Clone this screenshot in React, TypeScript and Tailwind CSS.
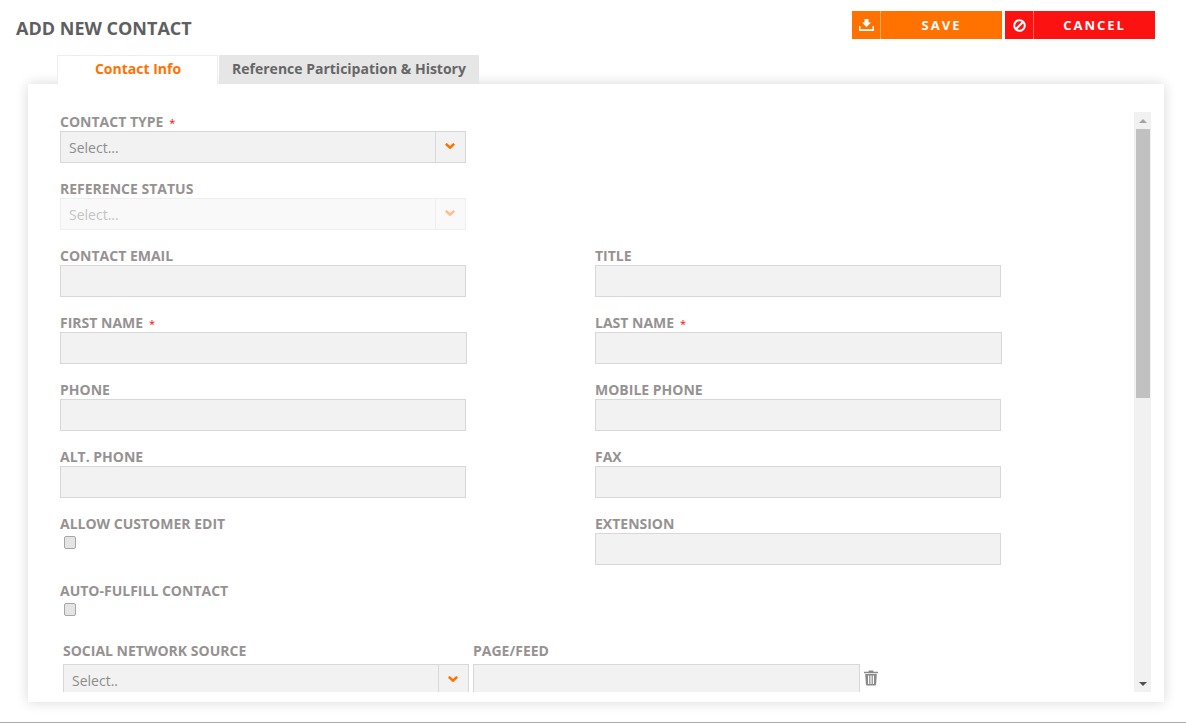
function Chevron({ disabled }: { disabled?: boolean }) {
  return (
    <svg viewBox="0 0 10 6" className="w-[10px] h-[6px] mb-[2px] mr-[2px]" fill="none" stroke={disabled ? "#ffbd8c" : "#ff7200"} strokeWidth="2.6">
      <path d="M0.8 0.8L5 4.6L9.2 0.8" />
    </svg>
  )
}

function Label({ text, required }: { text: string; required?: boolean }) {
  return (
    <div className="h-[19px] text-[14px] leading-[19px] font-bold text-[#969292] whitespace-nowrap">
      {text}
      {required && <span className="ml-[6px] text-[11px] text-[red] font-normal">*</span>}
    </div>
  )
}

function TextField({ label, required, wide }: { label: string; required?: boolean; wide?: boolean }) {
  return (
    <div className={wide ? "w-[407px]" : "w-[406px]"}>
      <Label text={label} required={required} />
      <input className="block w-full h-[32px] bg-[#f2f2f2] border border-[#d8d8d8] outline-none" />
    </div>
  )
}

function SelectField({ label, required, disabled }: { label: string; required?: boolean; disabled?: boolean }) {
  return (
    <div className="w-[406px]">
      <Label text={label} required={required} />
      <div className={disabled ? "flex h-[32px] bg-[#f9f9f9] border border-[#eeeeee]" : "flex h-[32px] bg-[#f2f2f2] border border-[#d8d8d8]"}>
        <div className={disabled ? "flex-1 pl-[8px] text-[14px] leading-[32px] text-[#c4c4c4]" : "flex-1 pl-[8px] text-[14px] leading-[32px] text-[#8c8c8c]"}>
          Select...
        </div>
        <div className={disabled ? "flex w-[30px] items-center justify-center border-l border-[#eeeeee]" : "flex w-[30px] items-center justify-center border-l border-[#d8d8d8]"}>
          <Chevron disabled={disabled} />
        </div>
      </div>
    </div>
  )
}

function CheckField({ label }: { label: string }) {
  return (
    <div className="w-[406px] h-[51px]">
      <Label text={label} />
      <input
        type="checkbox"
        className="block mt-[3px] ml-[4px] w-[12px] h-[13px] appearance-none rounded-[2px] border border-[#a6a6a6] bg-[#e4e4e4]"
      />
    </div>
  )
}

function Row({ children }: { children: React.ReactNode }) {
  return <div className="flex gap-[129px] mb-[16px]">{children}</div>
}

function TrayIcon() {
  return (
    <svg viewBox="0 0 15 12" className="w-[15px] h-[12px]" fill="white">
      <path d="M5.5 0h4v3.5H12L7.5 8 3 3.5h2.5z" />
      <path d="M0 7h1.5v3.2h12V7H15v5H0z" />
    </svg>
  )
}

function BanIcon() {
  return (
    <svg viewBox="0 0 13 13" className="w-[13px] h-[13px]" fill="none" stroke="white" strokeWidth="2">
      <circle cx="6.5" cy="6.5" r="5.3" />
      <path d="M2.8 10.2L10.2 2.8" />
    </svg>
  )
}

function TrashIcon() {
  return (
    <svg viewBox="0 0 14 16" className="w-[14px] h-[16px]" fill="#8a8a8a">
      <path d="M5 0.5h4l0.6 1.2H14v1.6H0V1.7h4.4z" />
      <path fillRule="evenodd" d="M1.2 4h11.6l-0.7 10.6q-0.1 1-1.1 1H3q-1 0-1.1-1zM4 5.5v8.5h1.2V5.5zM6.4 5.5v8.5h1.2V5.5zM8.8 5.5v8.5H10V5.5z" />
    </svg>
  )
}

export default function App() {
  return (
    <div className="w-[1186px] h-[723px] overflow-hidden bg-white border-b border-[#aaaaaa]" style={{ fontFamily: '"Open Sans", sans-serif' }}>
      <div className="flex h-[55px] items-start justify-between pl-[16px] pr-[31px]">
        <h1 className="mt-[15px] text-[18px] leading-[26px] font-bold text-[#5f5f5f]">ADD NEW CONTACT</h1>
        <div className="flex gap-[3px] mt-[11px]">
          <button className="flex w-[150px] h-[28px] items-center bg-[#ff7200] text-white">
            <span className="flex w-[28px] h-full items-center justify-center"><TrayIcon /></span>
            <span className="w-px h-full bg-[#ffa45c]" />
            <span className="flex-1 text-[13px] leading-[18px] font-bold tracking-[2px]">SAVE</span>
          </button>
          <button className="flex w-[150px] h-[28px] items-center bg-[#fd1212] text-white">
            <span className="flex w-[28px] h-full items-center justify-center"><BanIcon /></span>
            <span className="w-px h-full bg-[#ff6a6a]" />
            <span className="flex-1 text-[13px] leading-[18px] font-bold tracking-[2px]">CANCEL</span>
          </button>
        </div>
      </div>

      <div className="relative z-10 flex h-[29px] pl-[57px] text-[14px] font-bold">
        <div className="w-[161px] pl-px bg-white border-x border-t border-[#eeeeee] text-center leading-[26px] text-[#ff7200]">Contact Info</div>
        <div className="ml-px w-[260px] bg-[#e6e6e6] text-center leading-[27px] text-[#666666]">Reference Participation &amp; History</div>
      </div>

      <div className="ml-[28px] flex w-[1136px] h-[618px] bg-white pl-[32px] pr-[13px] pt-[28px] shadow-[0_0_12px_rgba(0,0,0,0.16)]">
        <div className="flex-1 h-[580px] overflow-hidden">
          <div className="mb-[16px]"><SelectField label="CONTACT TYPE" required /></div>
          <div className="mb-[16px]"><SelectField label="REFERENCE STATUS" disabled /></div>
          <Row>
            <TextField label="CONTACT EMAIL" />
            <TextField label="TITLE" />
          </Row>
          <Row>
            <TextField label="FIRST NAME" required wide />
            <div className="-ml-px"><TextField label="LAST NAME" required wide /></div>
          </Row>
          <Row>
            <TextField label="PHONE" />
            <TextField label="MOBILE PHONE" />
          </Row>
          <Row>
            <TextField label="ALT. PHONE" />
            <TextField label="FAX" />
          </Row>
          <Row>
            <CheckField label="ALLOW CUSTOMER EDIT" />
            <TextField label="EXTENSION" />
          </Row>
          <CheckField label="AUTO-FULFILL CONTACT" />
          <div className="mt-[9px] ml-[3px] flex">
            <div className="w-[410px]">
              <div className="h-[23px]"><Label text="SOCIAL NETWORK SOURCE" /></div>
              <div className="flex w-[406px] h-[32px] bg-[#f2f2f2] border border-[#d8d8d8]">
                <div className="flex-1 pl-[8px] text-[14px] leading-[32px] text-[#8c8c8c]">Select..</div>
                <div className="flex w-[30px] items-center justify-center border-l border-[#d8d8d8]">
                  <Chevron />
                </div>
              </div>
            </div>
            <div className="w-[387px]">
              <div className="h-[23px]"><Label text="PAGE/FEED" /></div>
              <div className="h-[32px] bg-[#f2f2f2] border border-[#d8d8d8]" />
            </div>
            <div className="ml-[4px] mt-[29px]"><TrashIcon /></div>
          </div>
        </div>

        <div className="flex w-[17px] h-[580px] flex-col bg-[#f1f1f1]">
          <div className="flex h-[17px] items-center justify-center">
            <div className="w-0 h-0 border-x-[4px] border-b-[4px] border-x-transparent border-b-[#a3a3a3]" />
          </div>
          <div className="h-[269px] w-[14px] ml-[2px] bg-[#c1c1c1]" />
          <div className="flex-1" />
          <div className="flex h-[17px] items-center justify-center">
            <div className="w-0 h-0 border-x-[4px] border-t-[4px] border-x-transparent border-t-[#505050]" />
          </div>
        </div>
      </div>
    </div>
  )
}
